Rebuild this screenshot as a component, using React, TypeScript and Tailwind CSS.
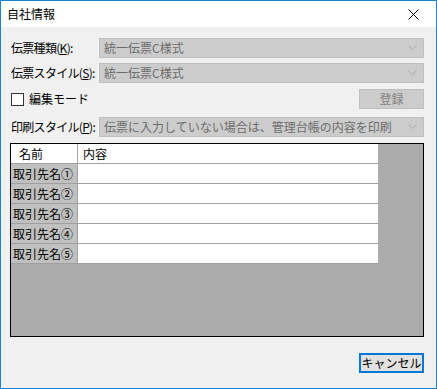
import React from "react";

const font = { fontFamily: '"Noto Sans CJK JP", "Noto Sans", sans-serif' };

function Chevron() {
  return (
    <svg width="9" height="6" viewBox="0 0 9 6" className="shrink-0">
      <path d="M0.5 0.5 L4.5 4.5 L8.5 0.5" fill="none" stroke="#a8a8a8" strokeWidth="1" />
    </svg>
  );
}

function Combo({ text }: { text: string }) {
  return (
    <div className="flex h-[20px] min-w-0 flex-1 items-center justify-between border border-[#bfbfbf] bg-[#cccccc] pl-[4px] pr-[6px]">
      <span className="whitespace-nowrap text-[12px] leading-none text-[#6d6d6d]">{text}</span>
      <Chevron />
    </div>
  );
}

function Label({ pre, key_ }: { pre: string; key_: string }) {
  return (
    <span className="w-[89px] shrink-0 whitespace-nowrap pl-[1px] text-[12px] leading-none tracking-[-0.7px] text-black">
      {pre}(<span className="underline">{key_}</span>):
    </span>
  );
}

export default function App() {
  const rows = ["取引先名①", "取引先名②", "取引先名③", "取引先名④", "取引先名⑤"];
  return (
    <div style={font} className="flex h-[389px] w-[437px] flex-col border border-[#1883d7] bg-[#f0f0f0]">
      <div className="flex h-[26px] shrink-0 items-center justify-between bg-white pl-[6px] pr-[17px]">
        <span className="text-[12px] leading-none text-black">自社情報</span>
        <svg width="11" height="11" viewBox="0 0 11 11">
          <path d="M0.5 0.5 L10.5 10.5 M10.5 0.5 L0.5 10.5" stroke="#000" strokeWidth="1" />
        </svg>
      </div>
      <div className="flex flex-1 flex-col pl-[9px] pr-[12px] pt-[11px]">
        <div className="flex h-[20px] items-center">
          <Label pre="伝票種類" key_="K" />
          <Combo text="統一伝票C様式" />
        </div>
        <div className="mt-[5px] flex h-[20px] items-center">
          <Label pre="伝票スタイル" key_="S" />
          <Combo text="統一伝票C様式" />
        </div>
        <div className="mt-[6px] flex h-[20px] items-center justify-between">
          <div className="flex items-center gap-[5px] pl-[1px]">
            <div className="h-[13px] w-[13px] border border-[#333333] bg-white" />
            <span className="whitespace-nowrap text-[12px] leading-none text-black">編集モード</span>
          </div>
          <div className="flex h-[20px] w-[65px] items-center justify-center border border-[#bfbfbf] bg-[#cccccc] text-[12px] leading-none text-[#838383]">
            登録
          </div>
        </div>
        <div className="mt-[8px] flex h-[20px] items-center">
          <Label pre="印刷スタイル" key_="P" />
          <Combo text="伝票に入力していない場合は、管理台帳の内容を印刷" />
        </div>
        <div className="mt-[6px] h-[194px] border border-black bg-[#ababab]">
          <div className="w-[367px] bg-white">
            <div className="flex h-[20px] border-b border-[#a0a0a0]">
              <div className="flex w-[67px] items-center border-r border-[#a0a0a0] pl-[8px] text-[12px] leading-none text-black">名前</div>
              <div className="flex flex-1 items-center pl-[5px] text-[12px] leading-none text-black">内容</div>
            </div>
            {rows.map((r) => (
              <div key={r} className="flex h-[20px] border-b border-[#a0a0a0]">
                <div className="flex w-[67px] items-center whitespace-nowrap border-r border-[#a0a0a0] bg-[#c0c0c0] pl-[2px] text-[12px] leading-none text-black">
                  {r}
                </div>
                <div className="flex-1 bg-white" />
              </div>
            ))}
          </div>
        </div>
        <div className="mt-[16px] flex justify-end">
          <div className="flex h-[20px] w-[65px] items-center justify-center border-2 border-[#0078d7] bg-[#e1e1e1] text-[12px] leading-none text-black">
            キャンセル
          </div>
        </div>
      </div>
    </div>
  );
}
